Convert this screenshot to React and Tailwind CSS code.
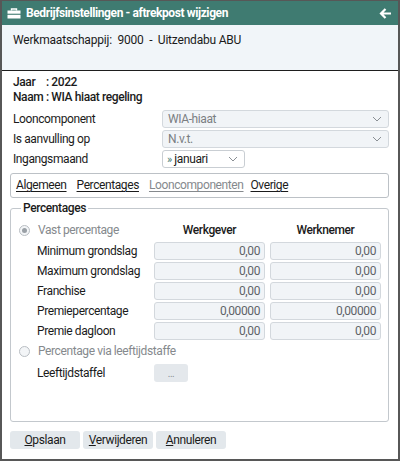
import React from 'react';

const rows = [
	{ label: 'Minimum grondslag', a: '0,00', b: '0,00' },
	{ label: 'Maximum grondslag', a: '0,00', b: '0,00' },
	{ label: 'Franchise', a: '0,00', b: '0,00' },
	{ label: 'Premiepercentage', a: '0,00000', b: '0,00000' },
	{ label: 'Premie dagloon', a: '0,00', b: '0,00' },
];

const Chevron = () => (
	<svg width="10" height="6" viewBox="0 0 10 6" className="shrink-0">
		<path d="M1 1 L5 5 L9 1" fill="none" stroke="#8a8f94" strokeWidth="1" />
	</svg>
);

const Radio = ({ checked }) => (
	<span className="w-[11px] h-[11px] rounded-full border border-[#b9bec3] bg-[#f3f5f7] flex items-center justify-center shrink-0">
		{checked && <span className="w-[5px] h-[5px] rounded-full bg-[#9aa0a6]"></span>}
	</span>
);

const App = () => {
	return (
		<div
			className="w-[400px] h-[461px] border-x-2 border-b-2 border-t border-[#575757] bg-white flex flex-col text-[12px] tracking-[-0.4px] leading-[15px] text-[#1b1b1b]"
			style={{ fontFamily: 'Roboto, "Liberation Sans", sans-serif' }}
		>
			{/* Title bar */}
			<div className="h-[24px] bg-[#3f7b71] flex items-center pl-[5px] pr-[6px] text-white shrink-0">
				<svg width="14" height="11" viewBox="0 0 14 11" className="mr-[5px]">
					<path d="M4.5 2.5 V1 H9.5 V2.5" fill="none" stroke="white" strokeWidth="1.4" />
					<rect x="0.5" y="2.5" width="13" height="3.2" fill="white" />
					<rect x="0.5" y="6.8" width="13" height="3.7" fill="white" />
				</svg>
				<span className="font-bold flex-1">Bedrijfsinstellingen - aftrekpost wijzigen</span>
				<svg width="13" height="11" viewBox="0 0 13 11">
					<path d="M12 5.5 H2.5 M6.5 1 L2 5.5 L6.5 10" fill="none" stroke="white" strokeWidth="2.2" />
				</svg>
			</div>

			{/* Header */}
			<div className="h-[46px] bg-[#f1f5f9] border-b border-[#1e1e1e] pl-[11px] pt-[8px] shrink-0">
				<span className="whitespace-pre tracking-[-0.2px]">Werkmaatschappij:  9000  -  Uitzendabu ABU</span>
			</div>

			{/* Content */}
			<div className="flex-1 flex flex-col px-[8px] pt-[4px]">
				<div className="pl-[3px] font-medium">
					<div className="flex"><span className="w-[33px]">Jaar</span><span>: 2022</span></div>
					<div className="flex"><span className="w-[33px]">Naam</span><span>: WIA hiaat regeling</span></div>
				</div>

				<div className="flex flex-col gap-[2px] mt-[5px]">
					<div className="flex items-center h-[18px]">
						<span className="w-[152px] pl-[3px]">Looncomponent</span>
						<div className="flex-1 h-[18px] mr-[1px] rounded-[3px] border border-[#d3d8dd] bg-[#f1f4f7] flex items-center pl-[5px] pr-[6px] text-[#7a7e82]">
							<span className="flex-1">WIA-hiaat</span>
							<Chevron />
						</div>
					</div>
					<div className="flex items-center h-[18px]">
						<span className="w-[152px] pl-[3px]">Is aanvulling op</span>
						<div className="flex-1 h-[18px] mr-[1px] rounded-[3px] border border-[#d3d8dd] bg-[#f1f4f7] flex items-center pl-[5px] pr-[6px] text-[#7a7e82]">
							<span className="flex-1">N.v.t.</span>
							<Chevron />
						</div>
					</div>
					<div className="flex items-center h-[18px]">
						<span className="w-[152px] pl-[3px]">Ingangsmaand</span>
						<div className="w-[83px] h-[18px] rounded-[3px] border border-[#c9ced3] bg-white flex items-center pl-[4px] pr-[6px]">
							<span className="flex-1"><span className="text-[#3f7b71] text-[11px]">»</span> januari</span>
							<Chevron />
						</div>
					</div>
				</div>

				{/* Tabs */}
				<div className="mt-[5px] mr-[1px] h-[25px] rounded-[3px] border border-[#bcc1c6] flex items-center gap-[10px] pl-[5px]">
					<span className="underline underline-offset-2">Algemeen</span>
					<span className="underline underline-offset-2">Percentages</span>
					<span className="underline underline-offset-2 text-[#85898d]">Looncomponenten</span>
					<span className="underline underline-offset-2 -ml-[3px]">Overige</span>
				</div>

				{/* Percentages */}
				<fieldset className="mt-[3px] mr-[1px] h-[221px] rounded-[3px] border border-[#c3c8cd] pl-[7px] pr-[7px]">
					<legend className="ml-[3px] px-[2px] font-medium">Percentages</legend>
					<div className="flex items-center h-[20px] mt-[4px]">
						<div className="w-[136px] flex items-center gap-[8px] text-[#85898d] pl-[1px]">
							<Radio checked />
							<span>Vast percentage</span>
						</div>
						<span className="w-[111px] text-center font-medium">Werkgever</span>
						<span className="w-[111px] ml-[5px] text-center font-medium">Werknemer</span>
					</div>
					<div className="flex flex-col gap-[2px] mt-[2px]">
						{rows.map((r) => (
							<div key={r.label} className="flex items-center h-[18px]">
								<span className="w-[136px] pl-[19px]">{r.label}</span>
								<div className="w-[111px] h-[18px] rounded-[3px] border border-[#d3d8dd] bg-[#f1f4f7] text-right pr-[4px] leading-[16px] text-[#5f6367]">{r.a}</div>
								<div className="w-[111px] h-[18px] ml-[5px] rounded-[3px] border border-[#d3d8dd] bg-[#f1f4f7] text-right pr-[4px] leading-[16px] text-[#5f6367]">{r.b}</div>
							</div>
						))}
					</div>
					<div className="flex items-center h-[20px] mt-[1px] gap-[8px] text-[#85898d] pl-[1px]">
						<Radio />
						<span>Percentage via leeftijdstaffe</span>
					</div>
					<div className="flex items-center h-[18px] mt-[3px]">
						<span className="w-[136px] pl-[19px]">Leeftijdstaffel</span>
						<div className="w-[34px] h-[18px] rounded-[3px] bg-[#e4e8ec] flex items-center justify-center text-[#8a8f94] text-[10px]">...</div>
					</div>
				</fieldset>

				{/* Buttons */}
				<div className="flex gap-[3px] mt-[9px]">
					<button className="w-[70px] h-[18px] rounded-[3px] bg-[#e3e8ec] leading-[18px]"><span className="underline">O</span>pslaan</button>
					<button className="w-[70px] h-[18px] rounded-[3px] bg-[#e3e8ec] leading-[18px]"><span className="underline">V</span>erwijderen</button>
					<button className="w-[70px] h-[18px] rounded-[3px] bg-[#e3e8ec] leading-[18px]"><span className="underline">A</span>nnuleren</button>
				</div>
			</div>
		</div>
	);
};

export default App;
